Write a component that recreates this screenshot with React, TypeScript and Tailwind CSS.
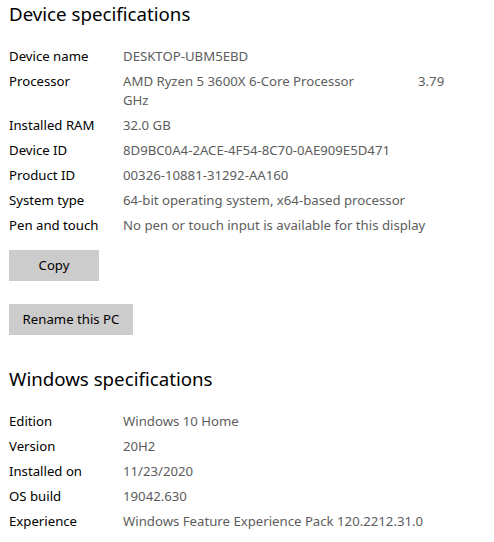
import React from 'react';

type Row = { label: string; value: React.ReactNode };

const deviceRows: Row[] = [
  { label: 'Device name', value: 'DESKTOP-UBM5EBD' },
  {
    label: 'Processor',
    value: (
      <>
        AMD Ryzen 5 3600X 6-Core Processor<span className="inline-block w-[64px]" />3.79 GHz
      </>
    ),
  },
  { label: 'Installed RAM', value: '32.0 GB' },
  { label: 'Device ID', value: '8D9BC0A4-2ACE-4F54-8C70-0AE909E5D471' },
  { label: 'Product ID', value: '00326-10881-31292-AA160' },
  { label: 'System type', value: '64-bit operating system, x64-based processor' },
  { label: 'Pen and touch', value: 'No pen or touch input is available for this display' },
];

const windowsRows: Row[] = [
  { label: 'Edition', value: 'Windows 10 Home' },
  { label: 'Version', value: '20H2' },
  { label: 'Installed on', value: '11/23/2020' },
  { label: 'OS build', value: '19042.630' },
  { label: 'Experience', value: 'Windows Feature Experience Pack 120.2212.31.0' },
];

const SpecList: React.FC<{ rows: Row[] }> = ({ rows }) => (
  <div className="flex flex-col gap-[6px]">
    {rows.map((r) => (
      <div key={r.label} className="flex text-[13.2px] leading-[19px]">
        <div className="w-[114px] shrink-0 text-black">{r.label}</div>
        <div className="w-[330px] text-[#5d5d5d]">{r.value}</div>
      </div>
    ))}
  </div>
);

const Heading: React.FC<{ children: React.ReactNode }> = ({ children }) => (
  <h2 className="pt-[2px] text-[18.7px] leading-[24px] font-normal text-black">{children}</h2>
);

const Button: React.FC<{ width: string; children: React.ReactNode }> = ({ width, children }) => (
  <button className={`${width} h-[31px] bg-[#cccccc] text-[13.2px] text-black`}>{children}</button>
);

export default function App() {
  return (
    <div
      className="min-h-[542px] w-[494px] bg-white pl-[9px]"
      style={{ fontFamily: '"Noto Sans", "Open Sans", sans-serif' }}
    >
      <Heading>Device specifications</Heading>
      <div className="mt-[21px]">
        <SpecList rows={deviceRows} />
      </div>
      <div className="mt-[15px] flex flex-col items-start gap-[23px]">
        <Button width="w-[90px]">Copy</Button>
        <Button width="w-[124px]">Rename this PC</Button>
      </div>
      <div className="mt-[30px]">
        <Heading>Windows specifications</Heading>
      </div>
      <div className="mt-[21px]">
        <SpecList rows={windowsRows} />
      </div>
    </div>
  );
}
